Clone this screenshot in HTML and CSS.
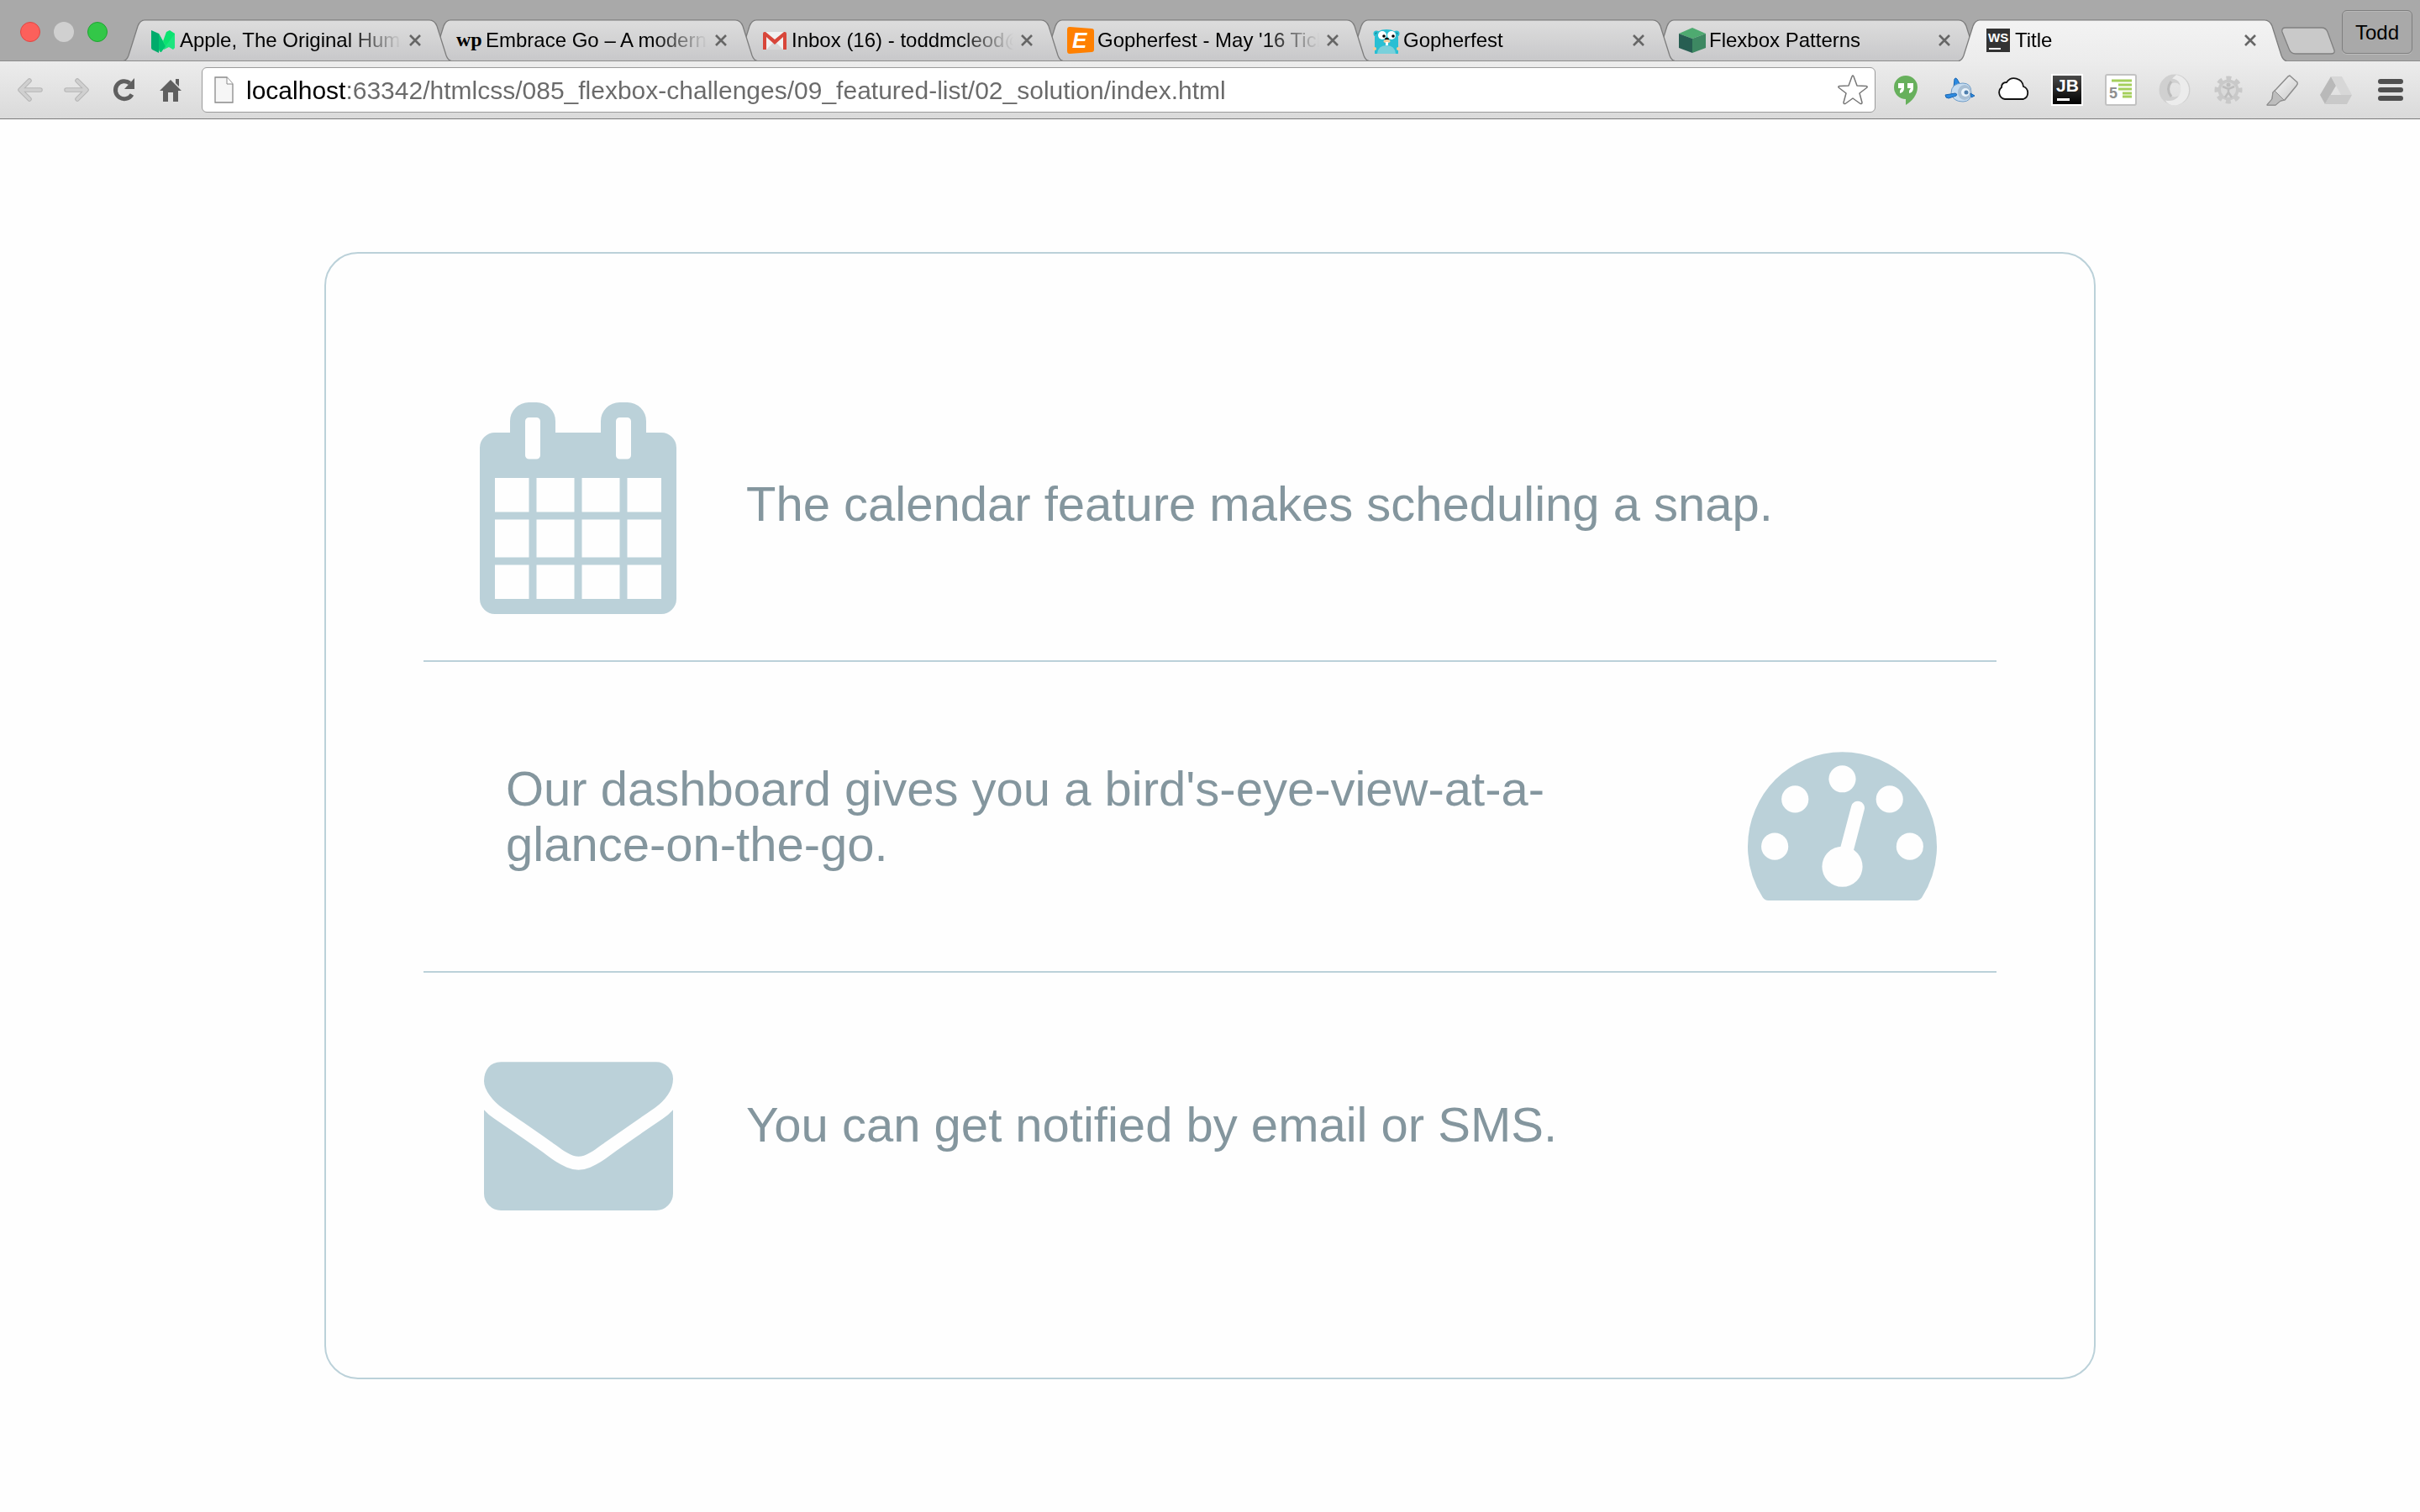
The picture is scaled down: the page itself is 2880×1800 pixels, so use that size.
FILE: index.html
```html
<!DOCTYPE html>
<html lang="en">
<head>
<meta charset="utf-8">
<title>Title</title>
<link rel="stylesheet" href="styles.css">
</head>
<body>
<svg class="defs" width="0" height="0" aria-hidden="true">
  <defs>
    <linearGradient id="tabFill" x1="0" y1="0" x2="0" y2="1"><stop offset="0" stop-color="#dddddd"/><stop offset="1" stop-color="#c8c8ca"/></linearGradient>
    <linearGradient id="activeFill" x1="0" y1="0" x2="0" y2="1"><stop offset="0" stop-color="#f3f3f3"/><stop offset="1" stop-color="#ececec"/></linearGradient>
    <linearGradient id="penFill" x1="0" y1="0" x2="1" y2="1"><stop offset="0" stop-color="#ffffff"/><stop offset="1" stop-color="#c4c4c4"/></linearGradient>
    <linearGradient id="darkFill" x1="0" y1="0" x2="0" y2="1"><stop offset="0" stop-color="#4a4a4a"/><stop offset="1" stop-color="#000000"/></linearGradient>
    <symbol id="tab" viewBox="0 0 390 50" preserveAspectRatio="none">
      <path fill="url(#tabFill)" d="M0 49.500C3 49 4.500 47 6 43L17 8C19 3 21 .8 25 .8H364C368 .8 371 3 373 8L384 43C385.500 47 387 49 390 49.500Z"/>
      <path fill="none" stroke="#7d7d7d" stroke-width="1.300" d="M0 49.500C3 49 4.500 47 6 43L17 8C19 3 21 .8 25 .8H364C368 .8 371 3 373 8L384 43C385.500 47 387 49 390 49.500"/>
      <path stroke="#8c8c8c" d="M0 49.500H390"/>
    </symbol>
    <symbol id="tab-active" viewBox="0 0 390 50" preserveAspectRatio="none">
      <path fill="url(#activeFill)" d="M0 50C3 49 4.500 47 6 43L17 8C19 3 21 .8 25 .8H364C368 .8 371 3 373 8L384 43C385.500 47 387 49 390 50Z"/>
      <path fill="none" stroke="#7d7d7d" stroke-width="1.300" d="M0 49.500C3 49 4.500 47 6 43L17 8C19 3 21 .8 25 .8H364C368 .8 371 3 373 8L384 43C385.500 47 387 49 390 49.500"/>
    </symbol>
    <symbol id="x" viewBox="0 0 14 14"><path d="M1 1l12 12M13 1L1 13" fill="none" stroke="#666" stroke-width="2.600"/></symbol>
  </defs>
</svg>

<header class="browser">
  <div class="tabstrip">
    <div class="lights">
      <button class="light light-red" aria-label="Close"></button>
      <button class="light light-grey" aria-label="Minimize"></button>
      <button class="light light-green" aria-label="Zoom"></button>
    </div>
    <nav class="tabs">
      <div class="tab tab-1">
        <svg class="tab-shape"><use href="#tab"/></svg>
        <svg class="favicon" viewBox="0 0 32 32"><path fill="#00ab6b" d="M2 4l9 4v23l-8-4q-1-1-1-2z"/><path fill="#1de57f" d="M11 8l8 14 8-15 3 1v17l-2 2-5-3-6 3-6-8z"/><path fill="#00c46f" d="M11 8l8 15-5 7q-3 0-3-4z"/><path fill="#0be370" d="M20 6l4-2 6 4-11 15-3-6z"/></svg>
        <a class="tab-title" href="#">Apple, The Original Human</a>
        <button class="tab-close" aria-label="Close tab"><svg><use href="#x"/></svg></button>
      </div>
      <div class="tab tab-2">
        <svg class="tab-shape"><use href="#tab"/></svg>
        <svg class="favicon" viewBox="0 0 32 32"><text class="mark-wp" x="1" y="23">wp</text></svg>
        <a class="tab-title" href="#">Embrace Go – A modern</a>
        <button class="tab-close" aria-label="Close tab"><svg><use href="#x"/></svg></button>
      </div>
      <div class="tab tab-3">
        <svg class="tab-shape"><use href="#tab"/></svg>
        <svg class="favicon" viewBox="0 0 32 32"><path fill="#f1f1f1" d="M3 6h26v21H3z"/><path fill="#d7d7d7" d="M6 27l10-10 10 10z"/><path fill="#d8463a" d="M2 8q0-2 2-2h1l11 9 11-9h1q2 0 2 2v19h-4V12l-10 9-10-9v15H2z"/></svg>
        <a class="tab-title" href="#">Inbox (16) - toddmcleod@</a>
        <button class="tab-close" aria-label="Close tab"><svg><use href="#x"/></svg></button>
      </div>
      <div class="tab tab-4">
        <svg class="tab-shape"><use href="#tab"/></svg>
        <svg class="favicon" viewBox="0 0 32 32"><path fill="#ff8000" d="M3 0l26 2q3 0 3 3v22q0 3-3 3L3 32q-3 0-3-3V3q0-3 3-3z"/><text class="mark-e" x="6" y="25">E</text></svg>
        <a class="tab-title" href="#">Gopherfest - May '16 Tick</a>
        <button class="tab-close" aria-label="Close tab"><svg><use href="#x"/></svg></button>
      </div>
      <div class="tab tab-5">
        <svg class="tab-shape"><use href="#tab"/></svg>
        <svg class="favicon" viewBox="0 0 32 32"><circle cx="4" cy="8" r="3.500" fill="#29bfd3"/><circle cx="28" cy="8" r="3.500" fill="#29bfd3"/><circle cx="4" cy="8" r="1.500" fill="#16778a"/><circle cx="28" cy="8" r="1.500" fill="#16778a"/><path fill="#29bfd3" d="M2 32V12Q4 3 16 3t14 9v20z"/><path fill="#79d0db" d="M5 32q1-10 11-10t11 10z"/><circle cx="11" cy="10" r="5" fill="#fff"/><circle cx="22" cy="10" r="5" fill="#fff"/><circle cx="13" cy="11" r="1.800"/><circle cx="24" cy="11" r="1.800"/><ellipse cx="16.500" cy="14.500" rx="2.500" ry="1.800"/><ellipse cx="16.500" cy="17" rx="4" ry="2" fill="#f4cd9d"/><path fill="#fff" d="M15 18h3v4h-3z"/><circle cx="2" cy="26" r="2" fill="#f4cd9d"/><circle cx="30" cy="26" r="2" fill="#f4cd9d"/></svg>
        <a class="tab-title" href="#">Gopherfest</a>
        <button class="tab-close" aria-label="Close tab"><svg><use href="#x"/></svg></button>
      </div>
      <div class="tab tab-6">
        <svg class="tab-shape"><use href="#tab"/></svg>
        <svg class="favicon" viewBox="0 0 32 32"><path fill="#4eaa70" d="M16 1l16 7-16 6L0 8z"/><path fill="#275e52" d="M0 8l16 6v17L0 25z"/><path fill="#3d8862" d="M32 8l-16 6v17l16-6z"/></svg>
        <a class="tab-title" href="#">Flexbox Patterns</a>
        <button class="tab-close" aria-label="Close tab"><svg><use href="#x"/></svg></button>
      </div>
      <div class="tab tab-7">
        <svg class="tab-shape"><use href="#tab-active"/></svg>
        <svg class="favicon" viewBox="0 0 32 32"><path fill="#333" d="M2 2h28v28H2z"/><text class="mark-ws" x="4" y="18">WS</text><path fill="#fff" d="M5 25h14v2H5z"/></svg>
        <a class="tab-title" href="#" aria-current="page">Title</a>
        <button class="tab-close" aria-label="Close tab"><svg><use href="#x"/></svg></button>
      </div>
      <button class="new-tab" aria-label="New tab"><svg viewBox="0 0 64 33"><path fill="#c9c9c9" stroke="#808080" stroke-width="1.300" d="M5 1H48q5 0 7 5l8 22q1 4-4 4H17q-6 0-8-6L1 6q-1-5 4-5z"/></svg></button>
    </nav>
    <button class="profile">Todd</button>
  </div>

  <div class="toolbar">
    <div class="nav-buttons">
      <button aria-label="Back"><svg viewBox="0 0 32 32"><path d="M15 5L4 16l11 11M4.500 16H28" fill="none" stroke="#b5b5b5" stroke-width="5.500" stroke-linejoin="round" stroke-linecap="round"/><path d="M15 5L4 16l11 11M4.500 16H28" fill="none" stroke="#d0d0d0" stroke-width="3.500" stroke-linejoin="round" stroke-linecap="round"/></svg></button>
      <button aria-label="Forward"><svg viewBox="0 0 32 32"><path d="M16 5l11 11-11 11M26.500 16H3" fill="none" stroke="#b5b5b5" stroke-width="5.500" stroke-linejoin="round" stroke-linecap="round"/><path d="M16 5l11 11-11 11M26.500 16H3" fill="none" stroke="#d0d0d0" stroke-width="3.500" stroke-linejoin="round" stroke-linecap="round"/></svg></button>
      <button aria-label="Reload"><svg viewBox="0 0 32 32"><path d="M25 21.500A10.500 10.500 0 1 1 22.500 8" fill="none" stroke="#5f5f5f" stroke-width="5"/><path d="M28 2v13H16z" fill="#5f5f5f"/></svg></button>
      <button aria-label="Home"><svg viewBox="0 0 32 32"><path fill="#5f5f5f" d="M15 4l13 13h-4v13h-6V19h-6v11H6V17H2zM21 3h4v9l-4-4z"/></svg></button>
    </div>
    <div class="omnibox">
      <svg class="page-icon" viewBox="0 0 24 32"><path fill="#f6f6f6" stroke="#8a8a8a" stroke-width="1.300" d="M1 1h14l7 8v22H1z"/><path fill="#fff" stroke="#8a8a8a" d="M15 1v8h7"/></svg>
      <input class="url" type="text" aria-label="Address" value="localhost:63342/htmlcss/085_flexbox-challenges/09_featured-list/02_solution/index.html">
      <button class="star" aria-label="Bookmark"><svg viewBox="0 0 36 36"><path fill="#fff" stroke="#777" stroke-width="1.500" stroke-linejoin="round" d="M17 2q1-2 2 0l4 11 11 .5q2 .5 .5 2L26 22l3 11q0 2-2 1.500L18 28l-9 6.500q-2 .5-2-1.500l3-11-8.500-6.500Q0 14 2 13.500L13 13z"/></svg></button>
    </div>
    <div class="extensions">
      <button aria-label="Hangouts"><svg viewBox="0 0 40 40"><path fill="#67b05c" d="M20 3a14 14 0 0 1 14 14c0 9-7 17-14 21v-7A14 14 0 0 1 20 3z"/><path fill="#fff" d="M11 12h7v6q0 5-5 6v-3l2-3h-4zM22 12h7v6q0 5-5 6v-3l2-3h-4z"/></svg></button>
      <button aria-label="App engine"><svg viewBox="0 0 40 40"><path fill="#2c8be2" stroke="#1c66b0" d="M13 17l1-10q1-2 3 0l5 9z"/><path fill="#c6dcf0" stroke="#6d9cc8" d="M10 24q0-12 14-12 10 0 10 11 0 11-10 11-12 0-14-10z"/><ellipse cx="26" cy="23" rx="8" ry="9" fill="#a8bfd4"/><circle cx="27" cy="23" r="5" fill="#e9f3fb"/><circle cx="28" cy="23" r="2.500" fill="#4f7fae"/><path fill="#2c8be2" stroke="#1c66b0" d="M3 26l12-2q3 1 1 3L7 30q-4 0-4-4zM33 24l5 3-4 2z"/></svg></button>
      <button aria-label="Cloud"><svg viewBox="0 0 40 40"><path fill="#fff" stroke="#111" stroke-width="1.800" d="M10 31a8 8 0 0 1-4-14q0-6 6-6a11 11 0 0 1 20 5 8 8 0 0 1 0 15z"/></svg></button>
      <button aria-label="JetBrains"><svg viewBox="0 0 40 40"><path fill="#fff" d="M1 1h38v38H1z"/><path fill="url(#darkFill)" d="M3 3h34v34H3z"/><text class="mark-jb" x="7" y="22">JB</text><path fill="#fff" d="M8 30h15v3H8z"/></svg></button>
      <button aria-label="Styles"><svg viewBox="0 0 40 40"><rect x="2" y="2" width="36" height="36" rx="2" fill="#fff" stroke="#c2c2c2" stroke-width="2"/><path stroke="#a5cf5c" stroke-width="2.800" d="M9 9h24M17 14h16M17 19h16M22 24h11M22 28h11"/><text class="mark-five" x="6" y="30">5</text></svg></button>
      <button aria-label="JSON"><svg viewBox="0 0 40 40"><circle cx="20" cy="20" r="13.500" fill="none" stroke="#d0d0d0" stroke-width="10"/><path d="M22 2A18.500 18.500 0 0 1 21 38.500q-9 0-12-6 8 2 14-3 7-7 3-17-2-5-9-6z" fill="#ececec"/><path d="M16 10q-7 9 0 18" fill="none" stroke="#bcbcbc" stroke-width="3"/></svg></button>
      <button aria-label="Accessibility"><svg viewBox="0 0 40 40"><circle cx="20" cy="20" r="12.500" fill="#c9c9c9"/><circle cx="20" cy="20" r="14" fill="none" stroke="#c9c9c9" stroke-width="5" stroke-dasharray="6 4.996" stroke-dashoffset="3"/><circle cx="20" cy="20" r="9" fill="#dadada"/><circle cx="20" cy="14" r="2.500" fill="#bdbdbd"/><path fill="none" stroke="#bdbdbd" stroke-width="2.500" d="M13 16l7 3 7-3M20 18v5l-4 6M20 23l4 6"/></svg></button>
      <button aria-label="Highlighter"><svg viewBox="0 0 40 40"><path fill="url(#penFill)" stroke="#8c8c8c" stroke-width="1.500" stroke-linejoin="round" d="M29 3l9 8q1 2-1 4L23 32l-5 1-6 5H2l6-7 1-8 4-4L27 4z"/><path fill="#bdbdbd" stroke="#8c8c8c" d="M11 21l11 11-4 1-6 5H2l6-7 1-8z"/></svg></button>
      <button aria-label="Drive"><svg viewBox="0 0 40 40"><path fill="#b9b9b9" d="M14 4l6 11L7 37 1 26z"/><path fill="#d7d7d7" d="M14 4h13l12 22H26z"/><path fill="#c9c9c9" d="M13 26h26l-6 11H7z"/></svg></button>
      <button aria-label="Menu"><svg viewBox="0 0 40 40"><path stroke="#4f4f4f" stroke-width="6" stroke-linecap="round" d="M9 10h24M9 20h24M9 30h24"/></svg></button>
    </div>
  </div>
</header>

<main class="card">
  <ul class="features">
    <li class="feature">
      <div class="feature-icon feature-icon-large"><svg viewBox="0 0 1792 1792"><path d="M192 1664h288v-288h-288v288zm352 0h320v-288h-320v288zm-352-352h288v-320h-288v320zm352 0h320v-320h-320v320zm-352-384h288v-288h-288v288zm736 736h320v-288h-320v288zm-384-736h320v-288h-320v288zm768 736h288v-288h-288v288zm-384-352h320v-320h-320v320zm-352-864v-288q0-13-9.500-22.500t-22.500-9.500h-64q-13 0-22.500 9.500t-9.500 22.500v288q0 13 9.500 22.500t22.500 9.500h64q13 0 22.500-9.500t9.500-22.500zm736 864h288v-320h-288v320zm-384-384h320v-288h-320v288zm384 0h288v-288h-288v288zm32-480v-288q0-13-9.500-22.500t-22.500-9.500h-64q-13 0-22.500 9.500t-9.500 22.500v288q0 13 9.500 22.500t22.500 9.500h64q13 0 22.500-9.500t9.500-22.500zm384-64v1280q0 52-38 90t-90 38h-1408q-52 0-90-38t-38-90v-1280q0-52 38-90t90-38h128v-96q0-66 47-113t113-47h64q66 0 113 47t47 113v96h384v-96q0-66 47-113t113-47h64q66 0 113 47t47 113v96h128q52 0 90 38t38 90z"/></svg></div>
      <p class="feature-text">The calendar feature makes scheduling a snap.</p>
    </li>
    <li class="feature feature-reverse">
      <div class="feature-icon"><svg viewBox="0 0 1792 1792"><path d="M1792 1152q0 261-141 483-19 29-54 29h-1402q-35 0-54-29-141-221-141-483 0-182 71-348t191-286 286-191 348-71 348 71 286 191 191 286 71 348z"/><g class="cutout"><circle cx="256" cy="1152" r="128"/><circle cx="448" cy="704" r="128"/><circle cx="896" cy="512" r="128"/><circle cx="1344" cy="704" r="128"/><circle cx="1536" cy="1152" r="128"/><circle cx="896" cy="1344" r="192"/><path d="M896 1344L1043 787"/></g></svg></div>
      <p class="feature-text">Our dashboard gives you a bird's-eye-view-at-a-glance-on-the-go.</p>
    </li>
    <li class="feature">
      <div class="feature-icon"><svg viewBox="0 0 1792 1792"><path d="M1792 710v794q0 66-47 113t-113 47h-1472q-66 0-113-47t-47-113v-794q44 49 101 87 362 246 497 345 57 42 92.500 65.500t94.500 48 110 24.500h2q51 0 110-24.500t94.500-48 92.500-65.500q170-123 498-345 57-39 100-87zm0-294q0 79-49 151t-122 123q-376 261-468 325-10 7-42.500 31t-54 38.500-52 32.500-57.500 27-50 9h-2q-23 0-50-9t-57.500-27-52-32.500-54-38.500-42.500-31q-91-64-262-182.500t-205-142.500q-62-42-117-115.500t-55-136.500q0-78 41.500-130t118.500-52h1472q65 0 112.500 47t47.500 113z"/></svg></div>
      <p class="feature-text">You can get notified by email or SMS.</p>
    </li>
  </ul>
</main>
</body>
</html>
```

FILE: styles.css
```css
* {
  box-sizing: border-box;
}

body {
  margin: 0;
  background: #fefefe;
  font-family: "Liberation Sans", Arial, sans-serif;
}

button {
  padding: 0;
  border: 0;
  background: none;
  font: inherit;
}

svg {
  display: block;
}

.defs {
  position: absolute;
}

/* Tab strip */

.tabstrip {
  display: flex;
  align-items: flex-end;
  height: 73px;
  padding: 0 9px 0 24px;
  background: #a9a9a9;
  box-shadow: inset 0 -1px #8c8c8c;
}

.lights {
  display: flex;
  gap: 16px;
  width: 123px;
  padding-bottom: 23px;
}

.light {
  width: 24px;
  height: 24px;
  border-radius: 50%;
}

.light-red {
  background: #fc605b;
  border: 1px solid #df4744;
}

.light-grey {
  background: #d0d0d0;
}

.light-green {
  background: #33c748;
  border: 1px solid #1fa532;
}

.tabs {
  display: flex;
  flex: 1;
  min-width: 0;
  align-items: flex-end;
}

.tab {
  position: relative;
  display: flex;
  flex: 0 1 390px;
  align-items: center;
  min-width: 0;
  height: 50px;
  margin-right: -26px;
  padding: 0 36px 0 31px;
}

.tab-1 { z-index: 6; }
.tab-2 { z-index: 5; }
.tab-3 { z-index: 4; }
.tab-4 { z-index: 3; }
.tab-5 { z-index: 2; }
.tab-6 { z-index: 1; }
.tab-7 { z-index: 7; }

.tab-shape {
  position: absolute;
  inset: 0;
  width: 100%;
  height: 100%;
}

.favicon {
  position: relative;
  flex: none;
  width: 32px;
  height: 32px;
}

.tab-title {
  position: relative;
  flex: 1;
  min-width: 0;
  margin: 0 9px 0 4px;
  overflow: hidden;
  color: #000;
  font-size: 24px;
  line-height: 32px;
  text-decoration: none;
  white-space: nowrap;
  -webkit-mask-image: linear-gradient(to left, transparent, #000 64px);
  mask-image: linear-gradient(to left, transparent, #000 64px);
}

.tab-close {
  position: relative;
  flex: none;
}

.tab-close svg {
  width: 14px;
  height: 14px;
}

.new-tab {
  margin: 0 0 8px 20px;
}

.new-tab svg {
  width: 64px;
  height: 33px;
}

.profile {
  align-self: flex-start;
  width: 84px;
  height: 52px;
  margin-top: 12px;
  padding-top: 2px;
  border: 1px solid #7f7f7f;
  border-radius: 6px;
  color: #000;
  font-size: 24px;
  box-shadow: 0 1px #bdbdbd, inset 0 1px #b8b8b8;
}

/* Small lettering inside the site and extension marks */

.mark-wp {
  font: bold 24px "Liberation Serif", serif;
}

.mark-e {
  fill: #fff;
  font: italic bold 26px "Liberation Sans", sans-serif;
}

.mark-ws {
  fill: #fff;
  font: bold 15px "Liberation Sans", sans-serif;
}

.mark-jb {
  fill: #fff;
  font: bold 21px "Liberation Sans", sans-serif;
}

.mark-five {
  fill: #8f8f8f;
  font: bold 18px "Liberation Sans", sans-serif;
}

/* Toolbar */

.toolbar {
  display: flex;
  align-items: center;
  height: 69px;
  padding: 0 16px 0 20px;
  border-bottom: 1px solid #7a7a7a;
  background: linear-gradient(#ececec, #dadada);
}

.nav-buttons {
  display: flex;
  gap: 24px;
}

.nav-buttons svg {
  width: 32px;
  height: 32px;
}

.omnibox {
  display: flex;
  flex: 1;
  align-items: center;
  min-width: 0;
  height: 54px;
  margin: 0 16px 0 20px;
  padding: 0 8px 0 14px;
  border: 1px solid #9a9a9a;
  border-radius: 6px;
  background: #fff;
}

.page-icon {
  flex: none;
  width: 24px;
  height: 32px;
}

.url {
  flex: 1;
  min-width: 0;
  height: 40px;
  margin-left: 14px;
  padding: 2px 0 0;
  border: 0;
  outline: 0;
  background: linear-gradient(to right, #000 119px, #6a6a6a 119px);
  -webkit-background-clip: text;
  background-clip: text;
  color: transparent;
  font: 30px "Liberation Sans", Arial, sans-serif;
}

.star svg {
  width: 36px;
  height: 36px;
}

.extensions {
  display: flex;
  gap: 24px;
}

.extensions svg {
  width: 40px;
  height: 40px;
}

/* Featured list */

.card {
  margin: 158px 386px;
  padding: 116px;
  border: 2px solid #bbd1d9;
  border-radius: 40px;
}

.features {
  margin: 0;
  padding: 0;
  list-style: none;
}

.feature {
  display: flex;
  align-items: center;
  min-height: 370px;
  border-bottom: 2px solid #bbd1d9;
}

.feature:last-child {
  min-height: 366px;
  border-bottom: 0;
}

.feature-reverse {
  flex-direction: row-reverse;
}

.feature-icon {
  display: flex;
  flex: none;
  justify-content: center;
  width: 368px;
  padding-top: 6px;
}

.feature-icon svg {
  width: 225px;
  height: 225px;
  fill: #bbd1d9;
}

.feature-icon-large svg {
  width: 252px;
  height: 252px;
}

.feature-icon .cutout {
  fill: #fefefe;
  stroke-linecap: round;
}

.cutout path {
  stroke: #fefefe;
  stroke-width: 128px;
}

.feature-text {
  flex: 1;
  margin: 0;
  padding: 0 16px 4px;
  color: #84969e;
  font-size: 58px;
  line-height: 66px;
}

.feature-reverse .feature-text {
  padding: 0 16px 0 98px;
}
```
